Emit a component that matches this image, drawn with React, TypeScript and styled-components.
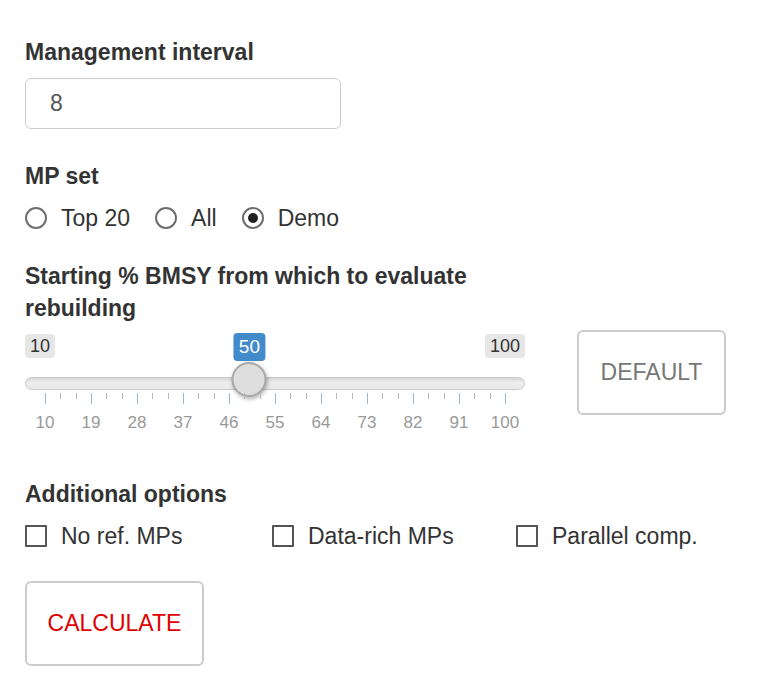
import React from "react";
import styled, { createGlobalStyle } from "styled-components";

const Global = createGlobalStyle`
  html, body { margin: 0; padding: 0; background: #fff; }
  body { font-family: "Liberation Sans", Arial, sans-serif; color: #333; }
`;

const Page = styled.div`
  padding: 36px 25px 0 25px;
  font-size: 23px;
`;

const Group = styled.div<{ $mb: number }>`
  margin-bottom: ${(p) => p.$mb}px;
`;

const Label = styled.div<{ $width?: number; $mb?: number }>`
  font-weight: bold;
  font-size: 23px;
  line-height: 32px;
  color: #333;
  margin-bottom: ${(p) => (p.$mb ?? 10)}px;
  width: ${(p) => (p.$width ? `${p.$width}px` : "auto")};
`;

const TextInput = styled.div`
  box-sizing: border-box;
  width: 316px;
  height: 51px;
  border: 1px solid #ccc;
  border-radius: 6px;
  padding-left: 24px;
  display: flex;
  align-items: center;
  color: #555;
  font-size: 23px;
`;

const OptionRow = styled.div`
  display: flex;
  align-items: center;
  height: 32px;
  margin-top: 1px;
`;

const RadioItem = styled.label`
  display: flex;
  align-items: center;
  gap: 14px;
  margin-right: 25px;
  color: #333;
  font-size: 23px;
`;

const RadioCircle = styled.span<{ $checked?: boolean }>`
  box-sizing: border-box;
  width: 22px;
  height: 22px;
  border-radius: 50%;
  border: 2px solid #6e6e6e;
  display: flex;
  align-items: center;
  justify-content: center;
  &::after {
    content: "";
    display: ${(p) => (p.$checked ? "block" : "none")};
    width: 10px;
    height: 10px;
    border-radius: 50%;
    background: #222;
  }
`;

const SliderRow = styled.div`
  display: flex;
  align-items: flex-start;
  gap: 52px;
  margin-top: 6px;
`;

const Slider = styled.div`
  position: relative;
  width: 500px;
  padding-top: 4px;
`;

const EndLabels = styled.div`
  display: flex;
  justify-content: space-between;
  height: 24px;
`;

const EndLabel = styled.span`
  background: #e6e6e6;
  color: #333;
  font-size: 18px;
  line-height: 24px;
  padding: 0 5px;
  border-radius: 4px;
`;

const Bubble = styled.span`
  position: absolute;
  top: 3px;
  transform: translateX(-50%);
  background: #428bca;
  color: #fff;
  font-size: 19px;
  line-height: 28px;
  padding: 0 5px;
  border-radius: 4px;
`;

const Track = styled.div`
  margin-top: 19px;
  height: 13px;
  border-radius: 7px;
  background: linear-gradient(#d6d6d6, #eeeeee 40%, #e8e8e8);
  border: 1px solid #cacaca;
  box-sizing: border-box;
`;

const Handle = styled.div`
  position: absolute;
  top: 32px;
  width: 35px;
  height: 35px;
  transform: translateX(-50%);
  border-radius: 50%;
  background: #dedede;
  border: 2px solid #a9a9a9;
  box-sizing: border-box;
  box-shadow: 1px 2px 4px rgba(0, 0, 0, 0.3);
`;

const Grid = styled.div`
  position: relative;
  height: 40px;
  margin: 3px 20px 0 20px;
`;

const Tick = styled.span<{ $major?: boolean }>`
  position: absolute;
  top: 0;
  width: 1px;
  height: ${(p) => (p.$major ? 11 : 6)}px;
  background: ${(p) => (p.$major ? "#9fb7cc" : "#b8b8b8")};
`;

const TickText = styled.span`
  position: absolute;
  top: 20px;
  transform: translateX(-50%);
  color: #999;
  font-size: 17px;
  line-height: 20px;
`;

const Button = styled.div<{ $w: number; $color: string }>`
  box-sizing: border-box;
  width: ${(p) => p.$w}px;
  height: 85px;
  border: 2px solid #ccc;
  border-radius: 6px;
  display: flex;
  align-items: center;
  justify-content: center;
  color: ${(p) => p.$color};
  font-size: 23px;
  background: #fff;
`;

const CheckRow = styled.div`
  display: grid;
  grid-template-columns: 247px 244px auto;
  align-items: center;
  height: 32px;
  margin-top: 6px;
`;

const CheckItem = styled.label`
  display: flex;
  align-items: center;
  gap: 14px;
  color: #333;
  font-size: 23px;
`;

const Box = styled.span`
  box-sizing: border-box;
  width: 22px;
  height: 22px;
  border: 2px solid #555;
  border-radius: 1px;
`;

const ticks = [10, 19, 28, 37, 46, 55, 64, 73, 82, 91, 100];

export default function App() {
  const gridW = 460;
  const handleX = 20 + ((50 - 10) / 90) * gridW;
  return (
    <>
      <Global />
      <Page>
        <Group $mb={31}>
          <Label>Management interval</Label>
          <TextInput>8</TextInput>
        </Group>
        <Group $mb={26}>
          <Label>MP set</Label>
          <OptionRow>
            <RadioItem>
              <RadioCircle />
              Top 20
            </RadioItem>
            <RadioItem>
              <RadioCircle />
              All
            </RadioItem>
            <RadioItem>
              <RadioCircle $checked />
              Demo
            </RadioItem>
          </OptionRow>
        </Group>
        <Group $mb={45}>
          <Label $width={470} $mb={0}>
            Starting % BMSY from which to evaluate rebuilding
          </Label>
          <SliderRow>
            <Slider>
              <EndLabels>
                <EndLabel>10</EndLabel>
                <EndLabel>100</EndLabel>
              </EndLabels>
              <Bubble style={{ left: handleX }}>50</Bubble>
              <Track />
              <Handle style={{ left: handleX }} />
              <Grid>
                {ticks.map((t, i) => (
                  <React.Fragment key={t}>
                    <Tick $major style={{ left: (i / 10) * gridW }} />
                    <TickText style={{ left: (i / 10) * gridW }}>{t}</TickText>
                    {i < 10 &&
                      [1, 2].map((k) => (
                        <Tick key={k} style={{ left: ((i + k / 3) / 10) * gridW }} />
                      ))}
                  </React.Fragment>
                ))}
              </Grid>
            </Slider>
            <Button $w={149} $color="#777">DEFAULT</Button>
          </SliderRow>
        </Group>
        <Group $mb={29}>
          <Label>Additional options</Label>
          <CheckRow>
            <CheckItem>
              <Box />
              No ref. MPs
            </CheckItem>
            <CheckItem>
              <Box />
              Data-rich MPs
            </CheckItem>
            <CheckItem>
              <Box />
              Parallel comp.
            </CheckItem>
          </CheckRow>
        </Group>
        <Button $w={179} $color="#e00000">CALCULATE</Button>
      </Page>
    </>
  );
}
